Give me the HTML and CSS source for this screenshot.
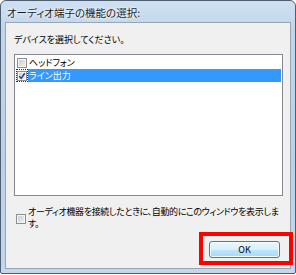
FILE: index.html
```html
<!DOCTYPE html>
<html lang="ja">
<head>
    <meta charset="UTF-8">
    <title>オーディオ端子の機能の選択</title>
    <link rel="stylesheet" href="styles.css">
</head>
<body>
    <div class="window">
        <div class="titlebar">オーディオ端子の機能の選択:</div>
        <div class="client">
            <div class="prompt">デバイスを選択してください。</div>
            <ul class="listbox">
                <li class="row">
                    <span class="cell"><span class="check"></span></span>
                    <span class="row-text">ヘッドフォン</span>
                </li>
                <li class="row row-selected">
                    <span class="cell cell-focus">
                        <span class="check">
                            <svg width="8" height="8" viewBox="0 0 8 8"><path d="M1.2 4.2 L3.2 6.4 L6.8 1.2" fill="none" stroke="#2b3f86" stroke-width="1.5"/></svg>
                        </span>
                    </span>
                    <span class="row-text">ライン出力</span>
                </li>
            </ul>
            <div class="autoshow">
                <span class="check"></span>
                <span class="autoshow-text">オーディオ機器を接続したときに、自動的にこのウィンドウを表示しま<br>す。</span>
            </div>
            <div class="footer">
                <button class="btn">OK</button>
            </div>
        </div>
        <!-- 赤枠の注記 -->
        <div class="callout"></div>
    </div>
</body>
</html>
```

FILE: styles.css
```css
body {
    margin: 0;
    background: #fff;
    font-family: "Noto Sans CJK JP", sans-serif;
    font-size: 9px;
    font-feature-settings: "palt";
    color: #000;
}
.window {
    position: relative;
    width: 296px;
    height: 274px;
    box-sizing: border-box;
    border: 1px solid #4f5e70;
    border-radius: 6px 6px 2px 2px;
    padding: 0 4px 4px 4px;
    background: linear-gradient(180deg, #cfe0f2 0, #c0d6ec 30px, #bad1ea 160px, #c3d8ee 100%);
    display: flex;
    flex-direction: column;
}
.titlebar {
    height: 19px;
    padding: 2px 0 0 2px;
    line-height: 19px;
    font-size: 10.5px;
    color: #1a1a1a;
    text-shadow: 0 0 4px #fff, 0 0 2px #fff;
}
.client {
    flex: 1;
    border: 1px solid #9aa5b2;
    background: #f0f0f0;
    padding: 11px 7px 0 8px;
}
.prompt {
    line-height: 12px;
}
.listbox {
    list-style: none;
    margin: 8px 0 0 0;
    padding: 1px 0 0 0;
    height: 142px;
    box-sizing: border-box;
    border: 1px solid #828790;
    background: #fff;
}
.row {
    display: flex;
    align-items: center;
    height: 13px;
    padding-left: 1px;
}
.cell {
    width: 12px;
    height: 13px;
    box-sizing: border-box;
    border: 1px solid transparent;
    display: flex;
    align-items: center;
    justify-content: center;
}
.cell-focus {
    border: 1px dotted #333;
}
.check {
    width: 10px;
    height: 10px;
    box-sizing: border-box;
    border: 1px solid #8e8f8f;
    box-shadow: inset 0 0 0 1px #f6f6f6;
    background: linear-gradient(135deg, #c6cbd1, #f2f2f2);
    display: flex;
    align-items: center;
    justify-content: center;
    flex-shrink: 0;
}
.row-text {
    flex: 1;
    height: 13px;
    line-height: 13px;
    padding-left: 1px;
    margin-right: 1px;
}
.row-selected .row-text {
    background: #3399ff;
    color: #fff;
}
.autoshow {
    display: flex;
    align-items: flex-start;
    margin-top: 10px;
}
.autoshow .check {
    margin: 8px 2px 0 2px;
}
.autoshow-text {
    line-height: 12px;
    white-space: nowrap;
    letter-spacing: -0.35px;
}
.footer {
    display: flex;
    justify-content: flex-end;
    margin-top: 11px;
    padding-right: 3px;
}
.btn {
    width: 71px;
    height: 17px;
    padding: 0;
    border: 1px solid #3c7fb1;
    border-radius: 3px;
    background: linear-gradient(180deg, #eaf6fd 0, #d9f0fc 50%, #bee6fd 51%, #a7d9f5 100%);
    box-shadow: inset 0 0 0 1px #f4fbff;
    font-family: "Noto Sans CJK JP", sans-serif;
    font-size: 9px;
    line-height: 15px;
    color: #000;
}
.callout {
    position: absolute;
    left: 198px;
    top: 231px;
    width: 94px;
    height: 33px;
    box-sizing: border-box;
    border: 4px solid #ff0000;
}
```
